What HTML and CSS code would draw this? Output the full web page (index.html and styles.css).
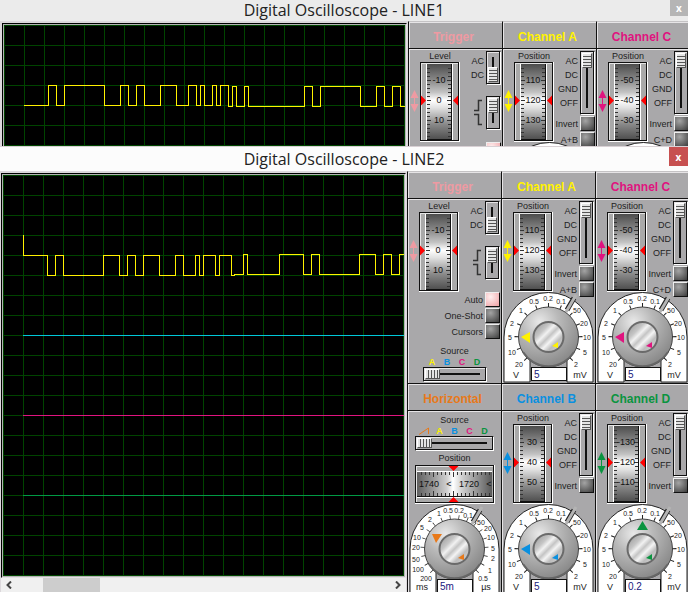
FILE: index.html
```html
<!DOCTYPE html>
<html lang="en">
<head>
<meta charset="utf-8">
<title>Digital Oscilloscope</title>
<link rel="stylesheet" href="styles.css">
</head>
<body>
<svg class="defs" aria-hidden="true">
  <defs>
    <linearGradient id="drum-v" x1="0" y1="0" x2="0" y2="1">
      <stop offset="0" stop-color="#4c4c4c"/><stop offset=".2" stop-color="#858585"/><stop offset=".38" stop-color="#c4c4c4"/>
      <stop offset=".48" stop-color="#fff"/><stop offset=".58" stop-color="#e2e2e2"/><stop offset=".8" stop-color="#8a8a8a"/><stop offset="1" stop-color="#505050"/>
    </linearGradient>
    <linearGradient id="drum-h" x1="0" y1="0" x2="1" y2="0">
      <stop offset="0" stop-color="#606060"/><stop offset=".2" stop-color="#949494"/><stop offset=".4" stop-color="#d0d0d0"/>
      <stop offset=".48" stop-color="#fff"/><stop offset=".6" stop-color="#d0d0d0"/><stop offset=".8" stop-color="#949494"/><stop offset="1" stop-color="#585858"/>
    </linearGradient>
    <radialGradient id="dome" cx=".35" cy=".25" r=".8">
      <stop offset="0" stop-color="#e9e9e9"/><stop offset=".4" stop-color="#b9b9b9"/><stop offset="1" stop-color="#858585"/>
    </radialGradient>
    <linearGradient id="cap" x1="0" y1="0" x2="1" y2="1">
      <stop offset="0" stop-color="#8d8d8d"/><stop offset=".3" stop-color="#c6c6c6"/><stop offset=".4" stop-color="#f2f2f2"/><stop offset=".5" stop-color="#c4c4c4"/>
      <stop offset=".6" stop-color="#f4f4f4"/><stop offset=".72" stop-color="#bdbdbd"/><stop offset="1" stop-color="#d8d8d8"/>
    </linearGradient>
    <symbol id="gauge" viewBox="0 0 40 80">
      <path d="M0 0H40V80H0Z" fill="#fff"/>
      <path d="M0 0H39V79H0Z" fill="#111"/>
      <path d="M1 1H38V78H1Z" fill="#e4e4e4"/>
      <path d="M2 2H38V78H2Z" fill="#a9a9a9"/>
      <path d="M6 2H33V78H6Z" fill="#fff"/>
      <path d="M7 2H32V78H7Z" fill="#111"/>
      <path d="M7 2H31V77H7Z" fill="url(#drum-v)"/>
      <path d="M8.500 6V75M29.500 6V75" stroke="#333" stroke-width="3" stroke-dasharray="1 3"/>
      <path d="M7 18.500H11M7 38.500H11M7 58.500H11M27 18.500H31M27 38.500H31M27 58.500H31" stroke="#333"/>
      <path d="M1 33.500V43.500L6 38.500ZM38 33.500V43.500L33 38.500Z" fill="#f00"/>
    </symbol>
    <symbol id="updown" viewBox="0 0 11 24">
      <path d="M5.500 4V20" stroke="currentColor"/>
      <path d="M5.500 1L9.500 9H1.500ZM5.500 23L9.500 15H1.500Z" fill="currentColor"/>
    </symbol>
    <symbol id="knob" viewBox="0 0 92 91">
      <path d="M1 90V45A44.500 44.500 0 0 1 90 45V90H64V65H27V90Z" fill="#fff" stroke="#222"/>
      <path d="M64 18L71 6" stroke="#222" stroke-width="5"/>
      <path d="M63 20L73 3" stroke="#b4b4b4" stroke-width="3"/>
      <circle cx="45.500" cy="45" r="30" fill="url(#dome)" stroke="#444"/>
      <path d="M20 60A30 30 0 0 0 71 60" fill="none" stroke="#666" stroke-width="2"/>
      <circle cx="45.500" cy="45" r="15" fill="url(#cap)" stroke="#6a6a6a" stroke-width="2"/>
      <path d="M49 54L55 50L55 56Z" fill="currentColor"/>
    </symbol>
    <symbol id="volts" viewBox="0 0 92 91">
      <path d="M22.900 67.600A32 32 0 1 1 68.100 67.600" pathLength="120.8" fill="none" stroke="#222" stroke-width="4" stroke-dasharray=".8 9.2"/>
      <g class="scale">
        <text x="16" y="75">20</text><text x="9" y="63">10</text><text x="7" y="48">5</text><text x="9" y="34">2</text><text x="18" y="21">1</text>
        <text x="31" y="12">0.5</text><text x="45" y="9">0.2</text><text x="58" y="12">0.1</text><text x="74" y="21">50</text><text x="81" y="34">20</text>
        <text x="84" y="48">10</text><text x="82" y="63">5</text><text x="73" y="75">2</text>
        <text class="unit" x="13" y="86">V</text><text class="unit" x="77" y="86">mV</text>
      </g>
    </symbol>
    <symbol id="edges" viewBox="0 0 12 34">
      <path d="M2 14.500H6.500V4.500H10M2 18.500H6.500V28.500H10" fill="none" stroke="#333" stroke-width="1.500"/>
    </symbol>
  </defs>
</svg>

<main class="desktop">
  <section class="window window-back">
    <header class="titlebar"><h1>Digital Oscilloscope - LINE1</h1><button class="close" type="button" aria-label="Close">x</button></header>
    <div class="body">
      <div class="display">
        <div class="screen">
          <svg class="traces" width="401" height="400" viewBox="0 0 401 400" role="img" aria-label="Channel A trace">
            <path class="trace-a" d="M20 80.500H44.500V60.500H52.500V80.500H60.500V60.500H100.500V80.500H116.500V60.500H124.500V80.500H132.500V60.500H140.500V80.500H156.500V60.500H172.500V80.500H184.500V60.500H192.500V80.500H196.500V60.500H200.500V80.500H208.500V60.500H212.500V80.500H216.500V60.500H224.500V81.500H228.500V61.500H232.500V81.500H240.500V61.500H244.500V81.500H300.500V61.500H308.500V81.500H316.500V61.500H356.500V81.500H372.500V61.500H380.500V81.500H388.500V61.500H396.500V81.500H401"/>
          </svg>
        </div>
      </div>
      <div class="controls">
        <section class="unit-panel trigger">
          <h2>Trigger</h2>
          <div class="upper">
            <svg class="nudge"><use href="#updown"/></svg>
            <div class="dial"><span>Level</span><svg width="40" height="80"><use href="#gauge"/><g class="num"><text x="19" y="21">-10</text><text x="19" y="41">0</text><text x="19" y="61">10</text></g></svg></div>
            <div class="side">
              <div class="switch short"><ul><li>AC</li><li>DC</li></ul><input type="range" min="0" max="1" value="1" aria-label="Trigger coupling"></div>
              <div class="switch short"><svg class="edges"><use href="#edges"/></svg><input type="range" min="0" max="1" value="0" aria-label="Trigger edge"></div>
            </div>
          </div>
          <div class="modes"><label><input type="checkbox" checked aria-label="Auto"></label></div>
        </section>
        <section class="unit-panel ch-a">
          <h2>Channel A</h2>
          <div class="upper">
            <svg class="nudge"><use href="#updown"/></svg>
            <div class="dial"><span>Position</span><svg width="40" height="80"><use href="#gauge"/><g class="num"><text x="19" y="21">110</text><text x="19" y="41">120</text><text x="19" y="61">130</text></g></svg></div>
            <div class="side">
              <div class="switch"><ul><li>AC</li><li>DC</li><li>GND</li><li>OFF</li></ul><input type="range" min="0" max="3" value="0" aria-label="Channel A coupling"></div>
              <label>Invert<input type="checkbox"></label><label>A+B<input type="checkbox"></label>
            </div>
          </div>
          <div class="knob"><svg width="92" height="91"><use href="#knob"/></svg></div>
        </section>
        <section class="unit-panel ch-c">
          <h2>Channel C</h2>
          <div class="upper">
            <svg class="nudge"><use href="#updown"/></svg>
            <div class="dial"><span>Position</span><svg width="40" height="80"><use href="#gauge"/><g class="num"><text x="19" y="21">-50</text><text x="19" y="41">-40</text><text x="19" y="61">-30</text></g></svg></div>
            <div class="side">
              <div class="switch"><ul><li>AC</li><li>DC</li><li>GND</li><li>OFF</li></ul><input type="range" min="0" max="3" value="0" aria-label="Channel C coupling"></div>
              <label>Invert<input type="checkbox"></label><label>C+D<input type="checkbox"></label>
            </div>
          </div>
          <div class="knob"><svg width="92" height="91"><use href="#knob"/></svg></div>
        </section>
      </div>
    </div>
  </section>

  <section class="window window-front">
    <header class="titlebar"><h1>Digital Oscilloscope - LINE2</h1><button class="close" type="button" aria-label="Close">x</button></header>
    <div class="body">
      <div class="display">
        <div class="screen">
          <svg class="traces" width="401" height="400" viewBox="0 0 401 400" role="img" aria-label="Channel traces">
            <path class="trace-b" d="M20 160.500H401"/>
            <path class="trace-c" d="M20 240.500H401"/>
            <path class="trace-d" d="M20 320.500H401"/>
            <path class="trace-a" d="M20.500 60V80.500H44.500V100.500H52.500V80.500H60.500V100.500H100.500V80.500H116.500V100.500H124.500V80.500H132.500V100.500H140.500V80.500H156.500V100.500H172.500V80.500H180.500V100.500H192.500V80.500H196.500V100.500H200.500V80.500H212.500V100.500H216.500V80.500H228.500V100.500H231V99.500H240.500V79.500H244.500V99.500H276.500V79.500H300.500V99.500H308.500V79.500H316.500V99.500H356.500V79.500H372.500V99.500H380.500V79.500H388.500V99.500H396.500V79.500H401"/>
          </svg>
        </div>
        <div class="scrollbar">
          <button type="button" aria-label="Scroll left"><svg width="6" height="8" viewBox="0 0 6 8"><path d="M5 .5L1.500 4L5 7.500"/></svg></button>
          <span class="thumb"></span>
          <button type="button" aria-label="Scroll right"><svg width="6" height="8" viewBox="0 0 6 8"><path d="M1 .5L4.500 4L1 7.500"/></svg></button>
        </div>
      </div>
      <div class="controls">
        <section class="unit-panel trigger">
          <h2>Trigger</h2>
          <div class="upper">
            <svg class="nudge"><use href="#updown"/></svg>
            <div class="dial"><span>Level</span><svg width="40" height="80"><use href="#gauge"/><g class="num"><text x="19" y="21">-10</text><text x="19" y="41">0</text><text x="19" y="61">10</text></g></svg></div>
            <div class="side">
              <div class="switch short"><ul><li>AC</li><li>DC</li></ul><input type="range" min="0" max="1" value="1" aria-label="Trigger coupling"></div>
              <div class="switch short"><svg class="edges"><use href="#edges"/></svg><input type="range" min="0" max="1" value="0" aria-label="Trigger edge"></div>
            </div>
          </div>
          <div class="modes">
            <label>Auto<input type="checkbox" checked></label>
            <label>One-Shot<input type="checkbox"></label>
            <label>Cursors<input type="checkbox"></label>
          </div>
          <div class="source">
            <span>Source</span>
            <div class="letters"><b class="ch-a">A</b><b class="ch-b">B</b><b class="ch-c">C</b><b class="ch-d">D</b></div>
            <input type="range" min="0" max="3" value="0" aria-label="Trigger source">
          </div>
        </section>
        <section class="unit-panel ch-a">
          <h2>Channel A</h2>
          <div class="upper">
            <svg class="nudge"><use href="#updown"/></svg>
            <div class="dial"><span>Position</span><svg width="40" height="80"><use href="#gauge"/><g class="num"><text x="19" y="21">110</text><text x="19" y="41">120</text><text x="19" y="61">130</text></g></svg></div>
            <div class="side">
              <div class="switch"><ul><li>AC</li><li>DC</li><li>GND</li><li>OFF</li></ul><input type="range" min="0" max="3" value="0" aria-label="Channel A coupling"></div>
              <label>Invert<input type="checkbox"></label><label>A+B<input type="checkbox"></label>
            </div>
          </div>
          <div class="knob"><svg width="92" height="91"><use href="#knob"/><use href="#volts"/><path d="M18 45L27 40V51Z" fill="currentColor"/></svg><input type="text" value="5" aria-label="Channel A volts per division"></div>
        </section>
        <section class="unit-panel ch-c">
          <h2>Channel C</h2>
          <div class="upper">
            <svg class="nudge"><use href="#updown"/></svg>
            <div class="dial"><span>Position</span><svg width="40" height="80"><use href="#gauge"/><g class="num"><text x="19" y="21">-50</text><text x="19" y="41">-40</text><text x="19" y="61">-30</text></g></svg></div>
            <div class="side">
              <div class="switch"><ul><li>AC</li><li>DC</li><li>GND</li><li>OFF</li></ul><input type="range" min="0" max="3" value="0" aria-label="Channel C coupling"></div>
              <label>Invert<input type="checkbox"></label><label>C+D<input type="checkbox"></label>
            </div>
          </div>
          <div class="knob"><svg width="92" height="91"><use href="#knob"/><use href="#volts"/><path d="M18 45L27 40V51Z" fill="currentColor"/></svg><input type="text" value="5" aria-label="Channel C volts per division"></div>
        </section>
        <section class="unit-panel horizontal">
          <h2>Horizontal</h2>
          <div class="source">
            <span>Source</span>
            <div class="letters"><svg width="15" height="10" viewBox="0 0 15 10"><path d="M2 8.500L11.500 2V8" fill="none" stroke="currentColor"/></svg><b class="ch-a">A</b><b class="ch-b">B</b><b class="ch-c">C</b><b class="ch-d">D</b></div>
            <input type="range" min="0" max="4" value="0" aria-label="Horizontal source">
          </div>
          <div class="offset">
            <span>Position</span>
            <svg width="80" height="39" viewBox="0 0 80 39">
              <path d="M0 0H80V39H0Z" fill="#fff"/><path d="M0 0H79V38H0Z" fill="#111"/>
              <path d="M1 1H78V37H1Z" fill="#e4e4e4"/><path d="M2 2H78V37H2Z" fill="#a9a9a9"/>
              <path d="M2 6H77V33H2Z" fill="#fff"/><path d="M2 7H77V32H2Z" fill="#111"/><path d="M2 7H77V31H2Z" fill="url(#drum-h)"/>
              <path d="M6 8.500H76M6 29.500H76" stroke="#333" stroke-width="3" stroke-dasharray="1 3"/>
              <path d="M18.500 7V12M38.500 7V12M58.500 7V12M18.500 26V31M38.500 26V31M58.500 26V31" stroke="#333"/>
              <path d="M33.500 1H43.500L38.500 6ZM33.500 37H43.500L38.500 32Z" fill="#f00"/>
              <g class="num"><text x="14" y="22">1740</text><text x="34" y="22">&lt;</text><text x="54" y="22">1720</text><text x="74" y="22">&lt;</text></g>
            </svg>
          </div>
          <div class="knob"><svg width="92" height="91"><use href="#knob"/>
            <path d="M22.900 67.600A32 32 0 1 1 68.100 67.600" pathLength="170.8" fill="none" stroke="#222" stroke-width="4" stroke-dasharray=".8 9.2"/>
            <path d="M23 30H33L27 39Z" fill="currentColor"/>
            <g class="scale">
              <text x="17" y="77">200</text><text x="9" y="68">100</text><text x="7" y="58">50</text><text x="7" y="46">20</text><text x="8" y="36">10</text><text x="13" y="26">5</text>
              <text x="21" y="18">2</text><text x="30" y="12">1</text><text x="39" y="9">0.5</text><text x="50" y="9">0.2</text><text x="59" y="14">0.1</text>
              <text x="72" y="21">50</text><text x="79" y="27">20</text><text x="82" y="36">10</text><text x="84" y="47">5</text><text x="84" y="57">2</text><text x="81" y="69">1</text><text x="74" y="77">0.5</text>
              <text class="unit" x="13" y="86">ms</text><text class="unit" x="77" y="86">µs</text>
            </g></svg><input type="text" value="5m" aria-label="Time per division"></div>
        </section>
        <section class="unit-panel ch-b">
          <h2>Channel B</h2>
          <div class="upper">
            <svg class="nudge"><use href="#updown"/></svg>
            <div class="dial"><span>Position</span><svg width="40" height="80"><use href="#gauge"/><g class="num"><text x="19" y="21">30</text><text x="19" y="41">40</text><text x="19" y="61">50</text></g></svg></div>
            <div class="side">
              <div class="switch"><ul><li>AC</li><li>DC</li><li>GND</li><li>OFF</li></ul><input type="range" min="0" max="3" value="0" aria-label="Channel B coupling"></div>
              <label>Invert<input type="checkbox"></label>
            </div>
          </div>
          <div class="knob"><svg width="92" height="91"><use href="#knob"/><use href="#volts"/><path d="M18 45L27 40V51Z" fill="currentColor"/></svg><input type="text" value="5" aria-label="Channel B volts per division"></div>
        </section>
        <section class="unit-panel ch-d">
          <h2>Channel D</h2>
          <div class="upper">
            <svg class="nudge"><use href="#updown"/></svg>
            <div class="dial"><span>Position</span><svg width="40" height="80"><use href="#gauge"/><g class="num"><text x="19" y="21">-130</text><text x="19" y="41">-120</text><text x="19" y="61">-110</text></g></svg></div>
            <div class="side">
              <div class="switch"><ul><li>AC</li><li>DC</li><li>GND</li><li>OFF</li></ul><input type="range" min="0" max="3" value="0" aria-label="Channel D coupling"></div>
              <label>Invert<input type="checkbox"></label>
            </div>
          </div>
          <div class="knob"><svg width="92" height="91"><use href="#knob"/><use href="#volts"/><path d="M40 26H51L45.500 17Z" fill="currentColor"/></svg><input type="text" value="0.2" aria-label="Channel D volts per division"></div>
        </section>
      </div>
    </div>
  </section>
</main>
</body>
</html>
```

FILE: styles.css
```css
* { box-sizing: border-box; }

body {
  margin: 0;
  background: #ececec;
  font: 9px/14px "Liberation Sans", Arial, sans-serif;
  color: #222;
  overflow: hidden;
}

svg { display: block; }
.defs { position: absolute; width: 0; height: 0; }
ul { list-style: none; margin: 0; padding: 0; }
.desktop { display: flex; flex-direction: column; height: 100vh; }

/* Windows */
.window { display: flex; flex-direction: column; overflow: hidden; background: #dcd8dc; }
.window-back { flex: none; height: 147px; border-bottom: 1px solid #d8d0d4; }
.window-front { flex: 1; }

.titlebar {
  position: relative;
  display: flex;
  justify-content: center;
  align-items: center;
  flex: none;
  height: 24px;
  background: #fcfcfc;
}
.window-back .titlebar { height: 21px; background: #ebebeb; }
.titlebar h1 {
  margin: 0;
  font: 16px/22px "Open Sans", "Noto Sans", sans-serif;
  color: #222;
}
.window-back h1 { line-height: 21px; }
.close {
  position: absolute;
  top: 0;
  right: 0;
  width: 19px;
  height: 19px;
  padding: 0;
  border: 0;
  background: #c75050;
  color: #fff;
  font: bold 10px/16px "Open Sans", sans-serif;
}
.window-back .close { width: 18px; height: 16px; background: #b5b5b5; line-height: 12px; }

.body { display: flex; flex: 1; min-height: 0; }

/* Scope display */
.display { display: flex; flex-direction: column; flex: 1; min-width: 0; padding: 2px 1px 0; }
.window-back .display { padding-left: 2px; }
.screen {
  flex: 1;
  min-height: 0;
  overflow: hidden;
  border: 1px solid #000;
  border-right-color: #e4e0e4;
  border-bottom-color: #e4e0e4;
  box-shadow: inset 1px 1px #b4b4b4, inset -1px -1px #b4b4b4;
  padding: 1px;
  background-color: #000;
  background-image: linear-gradient(#004400 1px, transparent 1px), linear-gradient(90deg, #004400 1px, transparent 1px);
  background-size: 20px 20px;
  background-origin: content-box;
  background-clip: content-box, content-box;
}
.window-back .screen { border-bottom: 0; padding-bottom: 0; box-shadow: inset 1px 1px #b4b4b4, inset -1px 0 #b4b4b4; }
.traces path { fill: none; stroke-width: 1; shape-rendering: crispEdges; }
.trace-a { stroke: #fff200; }
.trace-b { stroke: #00c8d8; }
.trace-c { stroke: #e0147f; }
.trace-d { stroke: #009a44; }

.scrollbar { display: flex; align-items: stretch; flex: none; height: 14px; background: #f0f0f0; }
.scrollbar button {
  display: grid;
  place-items: center;
  width: 16px;
  padding: 0;
  border: 0;
  background: none;
}
.scrollbar path { fill: none; stroke: #444; stroke-width: 2; }
.thumb { width: 57px; margin-left: 26px; margin-right: auto; background: #cdcdcd; }

/* Control panels */
.controls {
  display: grid;
  grid-template-columns: repeat(3, 94px);
  align-content: start;
  flex: none;
  width: 281px;
  overflow: hidden;
}
.window-back .controls { width: 280px; }
.unit-panel {
  height: 212px;
  border-top: 1px solid #111;
  border-left: 1px solid #111;
  background: #a9a8aa;
  box-shadow: inset 1px 1px #e6e4e6;
}
.unit-panel:nth-child(-n+3) { border-top-color: #c4c2c4; }
.unit-panel h2 {
  height: 27px;
  margin: 0;
  padding-right: 4px;
  border-bottom: 1px solid #111;
  box-shadow: 0 1px #e6e4e6;
  font: bold 12px/30px "Liberation Sans", Arial, sans-serif;
  text-align: center;
}
.unit-panel h2, .nudge, .knob svg, .letters { color: var(--tone); }
.letters b { color: var(--tone); }
.trigger { --tone: #ee9aa2; }
.horizontal { --tone: #e8791a; }
.ch-a { --tone: #fff200; }
.ch-b { --tone: #0a90e0; }
.ch-c { --tone: #e0147f; }
.ch-d { --tone: #0a9440; }

.upper { display: grid; grid-template-columns: 11px 40px 1fr; height: 93px; padding-right: 1px; }
.nudge { width: 11px; height: 24px; margin-top: 40px; }
.dial span, .offset span { display: block; line-height: 13px; text-align: center; }
.dial span { line-height: 15px; height: 13px; }
.num text { fill: #111; font-size: 9px; text-anchor: middle; }
.scale text { fill: #222; font-size: 7px; text-anchor: middle; }
.scale .unit { font-size: 9px; }

.side { padding-top: 2px; }
.switch { display: flex; justify-content: flex-end; gap: 2px; height: 64px; margin-bottom: 1px; text-align: right; }
.switch ul { padding-top: 3px; }
.switch.short { height: 34px; margin-bottom: 11px; }
.edges { width: 12px; height: 34px; }

input { margin: 0; appearance: none; border-radius: 0; }
input[type="range"] {
  border: 1px solid #111;
  border-right-color: #fff;
  border-bottom-color: #fff;
  box-shadow: inset -1px -1px #111, inset 1px 1px #e6e4e6;
  background: #a9a8aa;
}
.switch input { width: 15px; height: 64px; padding: 1px 2px 2px 1px; writing-mode: vertical-lr; }
.switch.short input { height: 34px; }
.switch input::-webkit-slider-runnable-track {
  background: linear-gradient(#111, #111) 50% 50% / 2px calc(100% - 8px) no-repeat;
}
.switch input::-webkit-slider-thumb {
  appearance: none;
  width: 10px;
  height: 15px;
  border: 1px solid #555;
  border-top-color: #fff;
  border-left-color: #fff;
  background: repeating-linear-gradient(#e4e4e4 0 2px, #555 2px 3px);
}

.side label, .modes label { display: flex; justify-content: flex-end; gap: 2px; height: 16px; line-height: 16px; white-space: nowrap; }
.modes { padding-right: 1px; }
input[type="checkbox"] {
  flex: none;
  width: 15px;
  height: 15px;
  border: 1px solid #eee;
  border-right-color: #111;
  border-bottom-color: #111;
  background: radial-gradient(circle at 35% 30%, #a4a4a4, #3c3c3c);
}
input[type="checkbox"]:checked { background: radial-gradient(circle at 35% 30%, #fff0f0, #f0a0a4); }

.source { display: flex; flex-direction: column; align-items: center; padding-top: 5px; }
.source span { line-height: 12px; }
.letters { display: flex; justify-content: center; line-height: 10px; }
.letters b { width: 15px; text-align: center; }
.source input { width: 64px; height: 15px; padding: 1px 2px 2px 1px; }
.source input::-webkit-slider-runnable-track {
  background: linear-gradient(#111, #111) 50% 50% / calc(100% - 8px) 2px no-repeat;
}
.source input::-webkit-slider-thumb {
  appearance: none;
  width: 15px;
  height: 10px;
  border: 1px solid #555;
  border-top-color: #fff;
  border-left-color: #fff;
  background: repeating-linear-gradient(90deg, #e4e4e4 0 2px, #555 2px 3px);
}
.horizontal .source { padding-top: 4px; }
.horizontal .source span { line-height: 11px; }
.horizontal .source input { width: 79px; }

.offset { padding-top: 1px; }
.offset svg { margin: 0 auto; }

.knob { position: relative; padding-left: 1px; }
.knob input {
  position: absolute;
  left: 29px;
  top: 75px;
  width: 36px;
  height: 14px;
  padding: 0 2px;
  border: 1px solid #111;
  background: #fff;
  color: #202080;
  font: 10px/12px "Liberation Sans", Arial, sans-serif;
}
```
